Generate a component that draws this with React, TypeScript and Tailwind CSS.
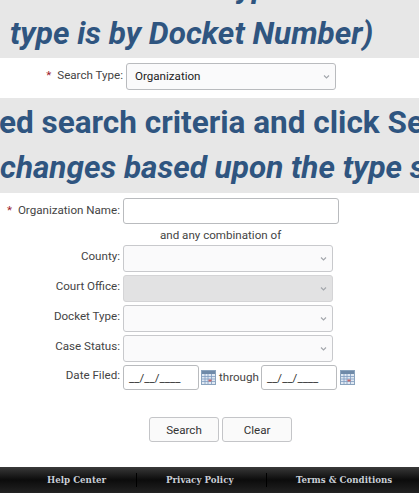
const labelClass = 'w-[120px] shrink-0 text-right text-[11.6px] leading-[15px] text-[#444]'

function Chevron() {
  return (
    <svg className="absolute right-[5px] top-1/2 -translate-y-1/2" width="7" height="5" viewBox="0 0 7 5" fill="none">
      <path d="M1 1 L3.5 3.5 L6 1" stroke="#a2a6ab" strokeWidth="1.1" />
    </svg>
  )
}

function Calendar() {
  return (
    <svg width="15" height="15" viewBox="0 0 15 15" className="shrink-0">
      <rect x="0.5" y="0.5" width="14" height="14" fill="#dfe8f2" stroke="#8aa3bd" />
      <rect x="1" y="1" width="13" height="3" fill="#6f8aa8" />
      <path d="M1 6.5H14M1 9H14M1 11.5H14M4 4V14M7 4V14M10.5 4V14" stroke="#7f9cc0" strokeWidth="0.8" />
      <rect x="7.5" y="9.5" width="3" height="2" fill="#c9686a" />
    </svg>
  )
}

function SelectRow({ label, disabled }: { label: string; disabled?: boolean }) {
  return (
    <div className="flex items-start gap-[3px]">
      <span className={labelClass + ' pt-[4px]'}>{label}:</span>
      <div className={'relative w-[210px] h-[27px] rounded-[3px] border ' + (disabled ? 'bg-[#e2e2e3] border-[#d4d4d6]' : 'bg-[#fafafb] border-[#c8c9cc]')}>
        <Chevron />
      </div>
    </div>
  )
}

function DateInput() {
  return (
    <div className="w-[76px] h-[25px] shrink-0 rounded-[3px] border border-[#b9bbbe] bg-white pl-[5px] text-[11.6px] leading-[24px] text-[#333]">
      __/__/____
    </div>
  )
}

export default function App() {
  return (
    <div className="w-[419px] h-[493px] overflow-hidden flex flex-col bg-white font-['Roboto',sans-serif]">
      {/* Top banner */}
      <div className="h-[58px] shrink-0 bg-[#e7e7e7] overflow-hidden flex flex-col justify-end pb-[1px] text-[31.5px] leading-[46px] font-bold italic text-[#2f5580] whitespace-nowrap">
        <div className="pl-[219px]">Type</div>
        <div className="pl-[10px]">type is by Docket Number)</div>
      </div>

      <div className="h-[40px] shrink-0 flex items-start pt-[5px]">
        <span className="w-[123px] shrink-0 pt-[5px] text-right text-[11.6px] leading-[15px] text-[#444]">
          <span className="text-[#9c1c2c] mr-[6px]">*</span>Search Type:
        </span>
        <div className="relative ml-[3px] w-[210px] h-[27px] rounded-[3px] border border-[#b9bbbe] bg-[#fafafb] pl-[8px] text-[11.6px] leading-[25px] text-[#222]">
          Organization
          <Chevron />
        </div>
      </div>

      {/* Instructions banner */}
      <div className="h-[95px] shrink-0 bg-[#e7e7e7] overflow-hidden flex flex-col pt-[2px] text-[31.5px] leading-[45px] font-bold text-[#2f5580] whitespace-nowrap">
        <div className="ml-[-1px]">ed search criteria and click Search</div>
        <div className="italic">changes based upon the type selected</div>
      </div>

      {/* Form */}
      <div className="flex-1 flex flex-col pt-[5px]">
        <div className="flex items-start gap-[3px]">
          <span className="w-[120px] shrink-0 pt-[5px] text-right text-[11.6px] leading-[15px] text-[#444]">
            <span className="text-[#9c1c2c] mr-[6px]">*</span>Organization Name:
          </span>
          <div className="w-[216px] h-[26px] rounded-[3px] border border-[#b9bbbe] bg-white" />
        </div>
        <div className="h-[21px] pl-[160px] pt-[2px] text-[11.6px] leading-[19px] text-[#444]">and any combination of</div>
        <div className="flex flex-col gap-[3px]">
          <SelectRow label="County" />
          <SelectRow label="Court Office" disabled />
          <SelectRow label="Docket Type" />
          <SelectRow label="Case Status" />
        </div>
        <div className="flex items-start mt-[3px]">
          <span className={labelClass + ' pt-[3px]'}>Date Filed:</span>
          <div className="ml-[3px] flex items-center">
            <DateInput />
            <span className="ml-[2px]"><Calendar /></span>
            <span className="ml-[3px] mr-[2px] text-[11.6px] text-[#444]">through</span>
            <DateInput />
            <span className="ml-[3px]"><Calendar /></span>
          </div>
        </div>
        <div className="flex gap-[3px] pl-[149px] mt-[27px]">
          <div className="w-[70px] h-[25px] rounded-[3px] border border-[#c4c5c8] bg-[#fafafa] text-center text-[11.6px] leading-[24px] text-[#333]">Search</div>
          <div className="w-[70px] h-[25px] rounded-[3px] border border-[#c4c5c8] bg-[#fafafa] text-center text-[11.6px] leading-[24px] text-[#333]">Clear</div>
        </div>
      </div>

      {/* Footer */}
      <div className="h-[26px] shrink-0 flex items-center bg-gradient-to-b from-[#3a3a3a] via-[#0c0c0c] to-[#222] font-['DejaVu_Serif',serif] text-[8.7px] leading-[14px] font-bold text-[#c9ced6]">
        <span className="w-[137px] pl-[47px] whitespace-nowrap border-r border-black">Help Center</span>
        <span className="w-[130px] pl-[29px] whitespace-nowrap border-r border-black">Privacy Policy</span>
        <span className="pl-[29px] whitespace-nowrap">Terms &amp; Conditions</span>
      </div>
    </div>
  )
}
